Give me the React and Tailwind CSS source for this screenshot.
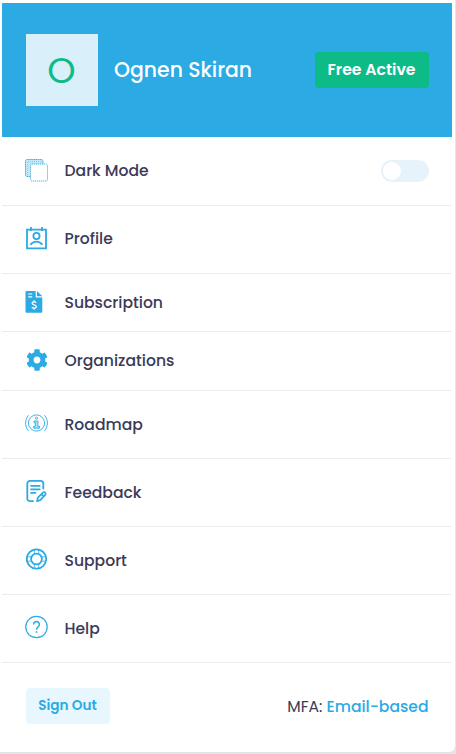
import { useState } from 'react';
import { FaCog } from 'react-icons/fa';

// === ICONS ===
const Icon = ({ children }) => (
  <svg width="24" height="24" viewBox="0 0 24 24" fill="none" stroke="#2baae4" strokeWidth="1.5">
    {children}
  </svg>
);

const DarkModeIcon = () => (
  <Icon>
    <rect x="1.5" y="1.5" width="17.5" height="17" rx="1.5" fill="#c4e9f9" stroke="none" />
    <rect x="1.5" y="1.5" width="17.5" height="17" rx="1.5" strokeWidth="0.9" strokeDasharray="1.6 0.5" />
    <path d="M4 3.7h14M3.7 4v13" strokeWidth="0.5" strokeDasharray="1 1" />
    <rect x="6.5" y="6" width="17" height="17" rx="1.5" fill="#fff" strokeWidth="0.9" strokeDasharray="1.2 0.8" />
  </Icon>
);

const ProfileIcon = () => (
  <Icon>
    <path d="M3 3.6h19v18.8H3zM7 1v4M18 1v4" strokeWidth="1.8" />
    <circle cx="12.5" cy="10" r="3.1" strokeWidth="1.8" />
    <path d="M6.4 18.8c1.6-2.3 3.5-3.2 6-3.2s4.4.9 6 3.2" strokeWidth="1.8" />
  </Icon>
);

const SubscriptionIcon = () => (
  <Icon>
    <path d="M2.5 1h9.2v6.6h6.6v14.2a1 1 0 0 1-1 1H2.5a1 1 0 0 1-1-1V2a1 1 0 0 1 1-1zM13 1l5.3 5.3H13z" fill="#2baae4" stroke="none" />
    <path d="M4.2 4h4M4.2 6.8h4" stroke="#fff" strokeWidth="1.2" />
    <path d="M12.2 12.7c-.4-.6-1.2-.9-2.1-.9-1.2 0-2 .6-2 1.5 0 2.2 4.2 1.1 4.2 3.3 0 .9-.9 1.6-2.1 1.6-1 0-1.9-.4-2.3-1.1M10.1 10.2v1.6M10.1 18.2v1.6" stroke="#fff" strokeWidth="1.3" />
  </Icon>
);

const OrganizationsIcon = () => (
  <span className="flex size-6 items-center justify-center pl-px">
    <FaCog size={22} color="#2baae4" />
  </span>
);

const RoadmapIcon = () => (
  <Icon>
    <g strokeWidth="0.9">
      <circle cx="12.5" cy="12" r="8.1" />
      <path d="M4.6 4.2c-4 4.2-4 11.4 0 15.6M20.4 4.2c4 4.2 4 11.4 0 15.6" />
      <circle cx="12.5" cy="7.3" r="1.1" />
      <path d="M10 10h3.9v5.4h1.6v1.8H9.6v-1.8h1.7v-3.7H10z" fill="#b5e1f6" />
    </g>
  </Icon>
);

const FeedbackIcon = () => (
  <Icon>
    <g strokeLinecap="round" strokeLinejoin="round" strokeWidth="1.8">
      <path d="M19.3 9.5v-5a2.7 2.7 0 0 0-2.7-2.7H6a2.7 2.7 0 0 0-2.7 2.7v15a2.7 2.7 0 0 0 2.7 2.7h3" />
      <path d="M7 6.8h8.8M7 10.3h8.8M7 13.8h4.5" strokeWidth="1.7" />
      <path d="M13 22.2l.9-3.5 5-5.1a1.5 1.5 0 0 1 2.3 2.2l-4.9 5.3zM17.5 15.3l2.2 2" strokeWidth="1.7" />
    </g>
  </Icon>
);

const SupportIcon = () => (
  <Icon>
    <circle cx="12.5" cy="12" r="9.7" strokeWidth="1.8" />
    <circle cx="12.5" cy="12" r="5.4" strokeWidth="1.8" />
    <path d="M10.3 2.6v4.3M14.7 2.6v4.3M10.3 17.1v4.3M14.7 17.1v4.3M3 9.8h4.4M3 14.2h4.4M17.6 9.8H22M17.6 14.2H22" strokeWidth="0.8" />
  </Icon>
);

const HelpIcon = () => (
  <Icon>
    <circle cx="12.5" cy="12" r="10.7" strokeWidth="1.2" />
    <path d="M9.6 9.5a2.9 2.9 0 1 1 4.7 2.2c-1.1.9-1.8 1.4-1.8 3.1" strokeWidth="1.5" />
    <path d="M12.5 16.2v1.6" strokeWidth="1.6" />
  </Icon>
);

const items = [
  { label: 'Dark Mode', icon: DarkModeIcon, row: 'h-[69px]', iconGap: 'mb-0.5', toggle: true },
  { label: 'Profile', icon: ProfileIcon, row: 'h-[68px] pb-0.5', iconGap: 'mb-0.5' },
  { label: 'Subscription', icon: SubscriptionIcon, row: 'h-[58px]', iconGap: 'mb-0.5' },
  { label: 'Organizations', icon: OrganizationsIcon, row: 'h-[59px]', iconGap: 'mb-0.5' },
  { label: 'Roadmap', icon: RoadmapIcon, row: 'h-[68px]', iconGap: 'mb-1' },
  { label: 'Feedback', icon: FeedbackIcon, row: 'h-[68px]', iconGap: 'mb-1' },
  { label: 'Support', icon: SupportIcon, row: 'h-[68px]', iconGap: 'mb-1' },
  { label: 'Help', icon: HelpIcon, row: 'h-[68px]', iconGap: 'mb-1' },
];

export default function App() {
  const [dark, setDark] = useState(false);

  return (
    <div className="h-[754px] w-[456px] overflow-hidden bg-[#e4e5ec] pr-px pb-0.5 font-[Poppins,Inter,sans-serif] text-[#3a3a59]">
      <div className="h-full rounded-br-md bg-white pt-[3px] pr-[3px] pl-0.5">
        {/* HEADER */}
        <div className="flex h-[134px] items-center bg-[#2baae4] pr-[23px] pl-6">
          <div className="flex size-[72px] items-center justify-center bg-[#d9effa] pt-0.5 pr-px text-[36px] text-[#0dbb87]">O</div>
          <h1 className="ml-4 pt-px text-[20.4px] font-medium whitespace-nowrap text-white">Ognen Skiran</h1>
          <span className="ml-auto flex h-9 w-[114px] items-center justify-center rounded bg-[#0dbb87] pr-px text-[15.7px] font-semibold whitespace-nowrap text-white">
            Free Active
          </span>
        </div>

        {/* MENU */}
        <ul>
          {items.map(({ label, icon: ItemIcon, row, iconGap, toggle }) => (
            <li key={label} className={`flex items-center border-b border-[#ebecf1] pr-[23px] pl-[22px] ${row}`}>
              <span className={`shrink-0 ${iconGap}`}>
                <ItemIcon />
              </span>
              <span className="ml-[16.5px] text-[15.6px] font-medium">{label}</span>
              {toggle && (
                <button
                  onClick={() => setDark(!dark)}
                  className={`ml-auto flex h-[22px] w-12 items-center rounded-full bg-[#e7f3fa] px-0.5 ${dark ? 'justify-end' : ''}`}
                >
                  <span className="size-[18px] rounded-full bg-white" />
                </button>
              )}
            </li>
          ))}
        </ul>

        {/* FOOTER */}
        <div className="flex h-[86px] items-center justify-between pr-[23.5px] pl-6">
          <button className="h-9 w-[84px] rounded bg-[#e8f6fd] pr-px text-[13.6px] font-semibold text-[#2baae4]">Sign Out</button>
          <div className="pt-0.5 text-[15.6px] whitespace-nowrap">
            MFA: <span className="font-medium text-[#2baae4]">Email-based</span>
          </div>
        </div>
      </div>
    </div>
  );
}
